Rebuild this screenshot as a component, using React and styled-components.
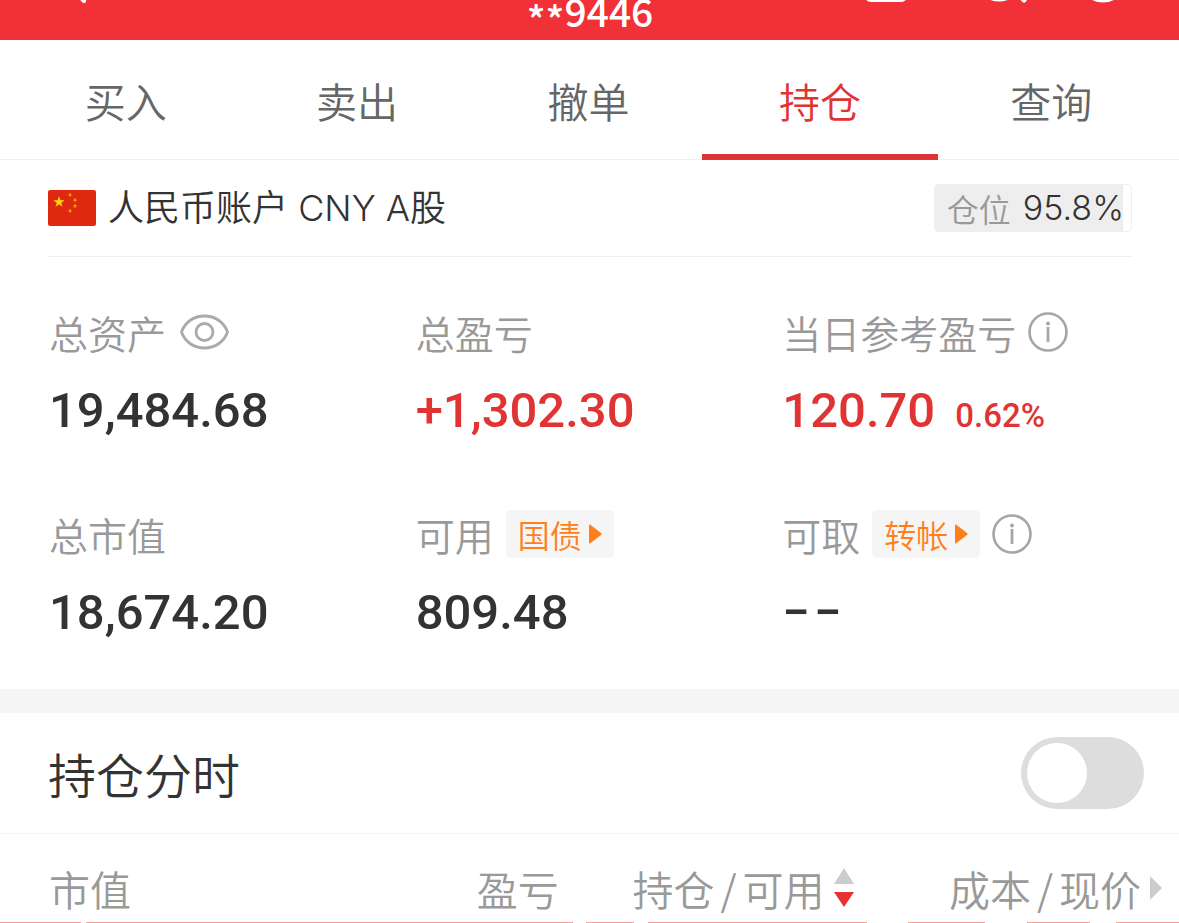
import React, { useState } from 'react';
import styled, { createGlobalStyle } from 'styled-components';

const cjk = '"Noto Sans CJK SC", sans-serif';

const GlobalStyle = createGlobalStyle`
  *, *::before, *::after { box-sizing: border-box; }
  body { margin: 0; background: #fff; font-family: ${cjk}; color: #333; }
  button { border: 0; padding: 0; background: none; font: inherit; color: inherit; cursor: pointer; }
  svg { display: block; flex: none; }
`;

const Page = styled.div`
  overflow: hidden;
  font-weight: 350;
`;

const NavBar = styled.header`
  display: flex;
  justify-content: space-between;
  height: 88px;
  margin-top: -48px;
  padding: 0 53px 0 54px;
  background: #f23037;
  color: #fff;
`;

const NavGroup = styled.div`
  display: flex;
  flex: 1;
  gap: 50px;
  justify-content: ${(p) => (p.$end ? 'flex-end' : 'flex-start')};
`;

const NavButton = styled.button`
  display: flex;
  align-items: flex-end;
  height: 54px;
`;

const Title = styled.h1`
  display: flex;
  margin: 0;
  padding-top: 30px;
  font-size: 39px;
  line-height: 56px;
  font-weight: 500;
`;

const Mask = styled.span`
  padding-top: 8px;
`;

const Tabs = styled.nav`
  display: flex;
  height: 120px;
  padding: 0 12px 0 10px;
  border-bottom: 1px solid #f1f1f1;
`;

const Tab = styled.button`
  position: relative;
  flex: 1;
  font-size: 41px;
  line-height: 60px;
  color: ${(p) => (p.$active ? '#e03434' : '#666')};

  &::after {
    content: '';
    display: ${(p) => (p.$active ? 'block' : 'none')};
    position: absolute;
    left: -2px;
    right: -2px;
    bottom: -1px;
    height: 6px;
    background: #e03434;
  }
`;

const Account = styled.section`
  display: flex;
  align-items: center;
  justify-content: space-between;
  height: 97px;
  margin: 0 47px 0 48px;
  border-bottom: 1px solid #f0f0f0;
`;

const AccountName = styled.div`
  display: flex;
  align-items: center;
  gap: 12px;
  font: 350 36px/48px Inter, ${cjk};
`;

const Position = styled.div`
  display: flex;
  align-items: center;
  gap: 12px;
  height: 48px;
  padding: 0 7px 0 12px;
  border: 1px solid #eee;
  border-radius: 5px;
  background: linear-gradient(to right, #eee 96%, #fff 96%);
  font-size: 32px;
  color: #999;
`;

const Percent = styled.span`
  font: 350 34px/48px Inter, sans-serif;
  color: #333;
`;

const Stats = styled.section`
  display: grid;
  grid-template-columns: repeat(3, 1fr);
  row-gap: 71px;
  padding: 51px 30px 48px 49px;
`;

const Stat = styled.div`
  display: flex;
  flex-direction: column;
  gap: 27px;
`;

const StatLabel = styled.div`
  display: flex;
  align-items: center;
  gap: 12px;
  height: 48px;
  font-size: 39px;
  line-height: 48px;
  color: #999;
  white-space: nowrap;
`;

const StatValue = styled.div`
  display: flex;
  align-items: baseline;
  gap: 20px;
  height: 56px;
  font: 500 49px/56px Roboto, sans-serif;
  color: ${(p) => (p.$gain ? '#e03434' : '#333')};
`;

const Rate = styled.span`
  font-size: 33px;
`;

const Dashes = styled.span`
  display: flex;
  gap: 4px;
`;

const Chip = styled.button`
  display: flex;
  align-items: center;
  gap: 7px;
  height: 48px;
  padding: 0 12px;
  border-radius: 5px;
  background: #f5f5f5;
  color: #ff801a;
  font-size: 32px;
  line-height: 48px;
`;

const Band = styled.div`
  height: 24px;
  background: #f5f5f5;
`;

const SwitchRow = styled.label`
  display: flex;
  align-items: center;
  justify-content: space-between;
  height: 121px;
  padding: 0 35px 0 48px;
  border-bottom: 1px solid #f3f3f3;
  font-size: 48px;
  line-height: 72px;
`;

const Switch = styled.input`
  appearance: none;
  display: flex;
  align-items: center;
  width: 123px;
  height: 72px;
  margin: 0;
  padding: 0 6px;
  border-radius: 36px;
  background: #ddd;

  &::before {
    content: '';
    width: 60px;
    height: 60px;
    border-radius: 50%;
    background: #fff;
  }
  &:checked {
    justify-content: flex-end;
    background: #e03434;
  }
`;

const Holdings = styled.table`
  width: 100%;
  table-layout: fixed;
  border-collapse: collapse;
`;

const HeadCell = styled.th`
  width: ${(p) => p.$width};
  padding: 28px ${(p) => p.$right || '0'} 8px ${(p) => p.$left || '0'};
  font-size: 41px;
  line-height: 52px;
  font-weight: 350;
  color: #999;
  text-align: left;
  white-space: nowrap;
`;

const HeadLabel = styled.span`
  display: flex;
  align-items: center;
  justify-content: ${(p) => (p.$end ? 'flex-end' : 'flex-start')};
  gap: 9px;
`;

const Slash = styled.span`
  margin: 0 6px;
`;

const Banner = styled.div`
  height: 1px;
  background: linear-gradient(
    to right,
    #f3a09c 81px, #fff 81px, #fff 86px, #f3a09c 86px, #f3a09c 573px, #fff 573px, #fff 586px,
    #f3a09c 586px, #f3a09c 634px, #fff 634px, #fff 648px, #f3a09c 648px, #f3a09c 867px,
    #fff 867px, #fff 908px, #f3a09c 908px, #f3a09c 985px, #fff 985px, #fff 1027px,
    #f3a09c 1027px, #f3a09c 1090px, #fff 1090px, #fff 1116px, #f3a09c 1116px
  );
`;

const BackIcon = () => (
  <svg width="34" height="48" viewBox="0 0 34 48" fill="none" stroke="#fff" strokeWidth="4" strokeLinecap="round">
    <path d="M30 3 10 23l20 20" />
  </svg>
);

const MessageIcon = () => (
  <svg width="54" height="48" viewBox="0 0 54 48" fill="none" stroke="#fff" strokeWidth="4">
    <rect x="2" y="6" width="40" height="36" rx="5" />
  </svg>
);

const SearchIcon = () => (
  <svg width="60" height="48" viewBox="0 0 60 48" fill="none" stroke="#fff" strokeWidth="5" strokeLinecap="round">
    <circle cx="31" cy="19" r="22" />
    <path d="m48 34 8 8" />
  </svg>
);

const MoreIcon = () => (
  <svg width="48" height="48" viewBox="0 0 48 48" fill="none" stroke="#fff" strokeWidth="5">
    <circle cx="25" cy="20" r="22" />
  </svg>
);

const STAR = '0,-1 .225,-.309 .951,-.309 .363,.118 .588,.809 0,.382 -.588,.809 -.363,.118 -.951,-.309 -.225,-.309';

const Flag = () => (
  <svg width="48" height="36" viewBox="0 0 48 36">
    <rect width="48" height="36" rx="2" fill="#de2910" />
    <polygon points={STAR} transform="translate(11 12) scale(6)" fill="#ffde00" />
    <g fill="#f9a80c">
      <polygon points={STAR} transform="translate(22 5) rotate(20) scale(2.400)" />
      <polygon points={STAR} transform="translate(27 10) rotate(40) scale(2.400)" />
      <polygon points={STAR} transform="translate(27 16) scale(2.400)" />
      <polygon points={STAR} transform="translate(22 21) rotate(20) scale(2.400)" />
    </g>
  </svg>
);

const EyeIcon = () => (
  <svg width="54" height="40" viewBox="0 0 54 40" fill="none" stroke="#aaa" strokeWidth="2.800">
    <path d="M3.500 20C7 10 16 4 26.500 4S46 10 49.500 20C46 30 37 36 26.500 36S7 30 3.500 20Z" strokeLinejoin="round" />
    <circle cx="26.500" cy="20" r="8.500" />
  </svg>
);

const InfoIcon = () => (
  <svg width="40" height="40" viewBox="0 0 40 40" fill="none" stroke="#a6a6a6">
    <circle cx="20" cy="20" r="18.500" strokeWidth="2.600" />
    <path d="M20 15v15" strokeWidth="2.800" />
    <circle cx="20" cy="11.500" r="1.900" fill="#a6a6a6" stroke="none" />
  </svg>
);

const ChipArrow = () => (
  <svg width="13" height="20" viewBox="0 0 13 20">
    <path d="M1 .5 12.300 9.200q.7.800 0 1.600L1 19.500q-1 .3-1-1V1.500Q0 .2 1 .5Z" fill="#ff801a" />
  </svg>
);

const SortIcon = () => (
  <svg width="20" height="40" viewBox="0 0 20 40">
    <path d="M10 0 20 16H0Z" fill="#ccc" />
    <path d="M0 24h20L10 39Z" fill="#e63232" />
  </svg>
);

const NextIcon = () => (
  <svg width="12" height="24" viewBox="0 0 12 24">
    <path d="M0 0 12 12 0 24Z" fill="#ccc" />
  </svg>
);

const TABS = ['买入', '卖出', '撤单', '持仓', '查询'];

export default function App() {
  const [tab, setTab] = useState('持仓');

  return (
    <Page>
      <GlobalStyle />
      <NavBar>
        <NavGroup>
          <NavButton aria-label="返回"><BackIcon /></NavButton>
        </NavGroup>
        <Title><Mask>**</Mask>9446</Title>
        <NavGroup $end>
          <NavButton aria-label="消息"><MessageIcon /></NavButton>
          <NavButton aria-label="搜索"><SearchIcon /></NavButton>
          <NavButton aria-label="更多"><MoreIcon /></NavButton>
        </NavGroup>
      </NavBar>

      <Tabs>
        {TABS.map((name) => (
          <Tab key={name} $active={name === tab} onClick={() => setTab(name)}>{name}</Tab>
        ))}
      </Tabs>

      <Account>
        <AccountName><Flag />人民币账户 CNY A股</AccountName>
        <Position>仓位<Percent>95.8%</Percent></Position>
      </Account>

      <Stats>
        <Stat>
          <StatLabel>总资产<EyeIcon /></StatLabel>
          <StatValue>19,484.68</StatValue>
        </Stat>
        <Stat>
          <StatLabel>总盈亏</StatLabel>
          <StatValue $gain>+1,302.30</StatValue>
        </Stat>
        <Stat>
          <StatLabel>当日参考盈亏<InfoIcon /></StatLabel>
          <StatValue $gain>120.70<Rate>0.62%</Rate></StatValue>
        </Stat>
        <Stat>
          <StatLabel>总市值</StatLabel>
          <StatValue>18,674.20</StatValue>
        </Stat>
        <Stat>
          <StatLabel>可用<Chip>国债<ChipArrow /></Chip></StatLabel>
          <StatValue>809.48</StatValue>
        </Stat>
        <Stat>
          <StatLabel>可取<Chip>转帐<ChipArrow /></Chip><InfoIcon /></StatLabel>
          <StatValue><Dashes><span>−</span><span>−</span></Dashes></StatValue>
        </Stat>
      </Stats>

      <Band />

      <SwitchRow>
        持仓分时
        <Switch type="checkbox" />
      </SwitchRow>

      <Holdings>
        <thead>
          <tr>
            <HeadCell $width="24%" $left="49px">市值</HeadCell>
            <HeadCell $width="23.400%"><HeadLabel $end>盈亏</HeadLabel></HeadCell>
            <HeadCell $width="25%"><HeadLabel $end><span>持仓<Slash>/</Slash>可用</span><SortIcon /></HeadLabel></HeadCell>
            <HeadCell $width="27.600%" $right="17px"><HeadLabel $end><span>成本<Slash>/</Slash>现价</span><NextIcon /></HeadLabel></HeadCell>
          </tr>
        </thead>
      </Holdings>
      <Banner />
    </Page>
  );
}
